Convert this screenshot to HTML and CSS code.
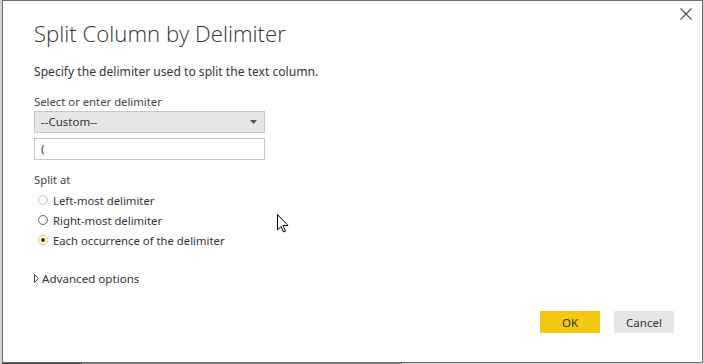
FILE: index.html
```html
<!DOCTYPE html>
<html lang="en">
<head>
    <meta charset="UTF-8">
    <title>Split Column by Delimiter</title>
    <link rel="stylesheet" href="styles.css">
</head>
<body>
    <div class="dialog">
        <button class="close" aria-label="Close">
            <svg width="12" height="12" viewBox="0 0 12 12"><path d="M0.5 0.5 L11.5 11.5 M11.5 0.5 L0.5 11.5" stroke="#555" stroke-width="1.2"/></svg>
        </button>
        <h1>Split Column by Delimiter</h1>
        <p class="lead">Specify the delimiter used to split the text column.</p>

        <label class="field-label">Select or enter delimiter</label>
        <div class="select">
            <span>--Custom--</span>
            <svg width="7" height="4" viewBox="0 0 7 4"><path d="M0 0 H7 L3.5 4 Z" fill="#555"/></svg>
        </div>
        <div class="input">(</div>

        <div class="group-label">Split at</div>
        <div class="radios">
            <div class="radio disabled"><span class="dot"></span>Left-most delimiter</div>
            <div class="radio"><span class="dot"></span>Right-most delimiter</div>
            <div class="radio checked"><span class="dot"></span>Each occurrence of the delimiter</div>
        </div>

        <div class="advanced">
            <svg width="5" height="9" viewBox="0 0 5 9"><path d="M0.5 0.5 L4.5 4.5 L0.5 8.5 Z" fill="none" stroke="#444" stroke-width="1"/></svg>
            Advanced options
        </div>

        <div class="actions">
            <button class="btn ok">OK</button>
            <button class="btn">Cancel</button>
        </div>

        <svg class="cursor" width="12" height="19" viewBox="0 0 12 19"><path d="M0.5 0.5 V16 L4 12.5 L6.5 18 L8.5 17 L6 11.5 H11 Z" fill="#fff" stroke="#000" stroke-width="1"/></svg>
    </div>
    <div class="backdrop">
        <span class="cell dark"></span><span class="cell"></span><span class="cell"></span><span class="cell"></span><span class="cell"></span>
    </div>
</body>
</html>
```

FILE: styles.css
```css
body {
    margin: 0;
    background: #d2d2d2;
    font-family: "Noto Sans", "Open Sans", sans-serif;
    color: #333;
    width: 704px;
    height: 364px;
    overflow: hidden;
}
.dialog {
    position: relative;
    box-sizing: border-box;
    width: 701px;
    height: 363px;
    margin-left: 2px;
    border: 1px solid #6b6b6b;
    background: #fff;
    padding: 17px 0 0 31px;
}
.close {
    position: absolute;
    top: 7px;
    right: 10px;
    border: 0;
    background: none;
    padding: 0;
    width: 12px;
    height: 12px;
}
.close svg { display: block; }
h1 {
    margin: 0;
    font-family: "Open Sans", sans-serif;
    font-weight: 300;
    font-size: 22.2px;
    line-height: 32px;
    color: #333;
}
.lead {
    margin: 13px 0 0;
    font-size: 12.1px;
    line-height: 18px;
    color: #333;
}
.field-label, .group-label {
    display: block;
    font-size: 11.3px;
    line-height: 16px;
    color: #444;
}
.field-label { margin-top: 13px; }
.select, .input {
    box-sizing: border-box;
    width: 231px;
    height: 22px;
    border: 1px solid #c6c6c6;
    font-size: 11.5px;
    line-height: 20px;
    padding-left: 6px;
    color: #333;
}
.select {
    margin-top: 1px;
    background: #e6e6e6;
    display: flex;
    justify-content: space-between;
    align-items: center;
    padding-right: 7px;
}
.input {
    margin-top: 5px;
    background: #fff;
}
.group-label { margin-top: 12px; }
.radios {
    margin-top: 2px;
    padding-left: 4px;
}
.radio {
    display: flex;
    align-items: center;
    height: 20px;
    font-size: 11.3px;
    color: #333;
}
.dot {
    box-sizing: border-box;
    width: 10px;
    height: 10px;
    border: 1.5px solid #666;
    border-radius: 50%;
    margin-right: 5px;
    display: flex;
    align-items: center;
    justify-content: center;
}
.radio.disabled .dot { border-color: #c4c4c4; }
.radio.checked .dot { border-color: #f2c811; }
.radio.checked .dot::after {
    content: "";
    width: 4px;
    height: 4px;
    border-radius: 50%;
    background: #333;
}
.advanced {
    margin-top: 21px;
    display: flex;
    align-items: center;
    gap: 3px;
    font-size: 11.6px;
    color: #333;
}
.actions {
    position: absolute;
    right: 28px;
    top: 310px;
    display: flex;
    gap: 14px;
}
.btn {
    width: 60px;
    height: 22px;
    border: 0;
    background: #e6e6e6;
    font-family: "Noto Sans", sans-serif;
    font-size: 11.5px;
    color: #333;
    padding: 0;
}
.btn.ok { background: #f2c811; }
.cursor {
    position: absolute;
    left: 274px;
    top: 213px;
}
.backdrop {
    display: flex;
    height: 1px;
    margin-left: 2px;
}
.cell { width: 80px; background: #888; }
.cell.dark { background: #444; }
```
